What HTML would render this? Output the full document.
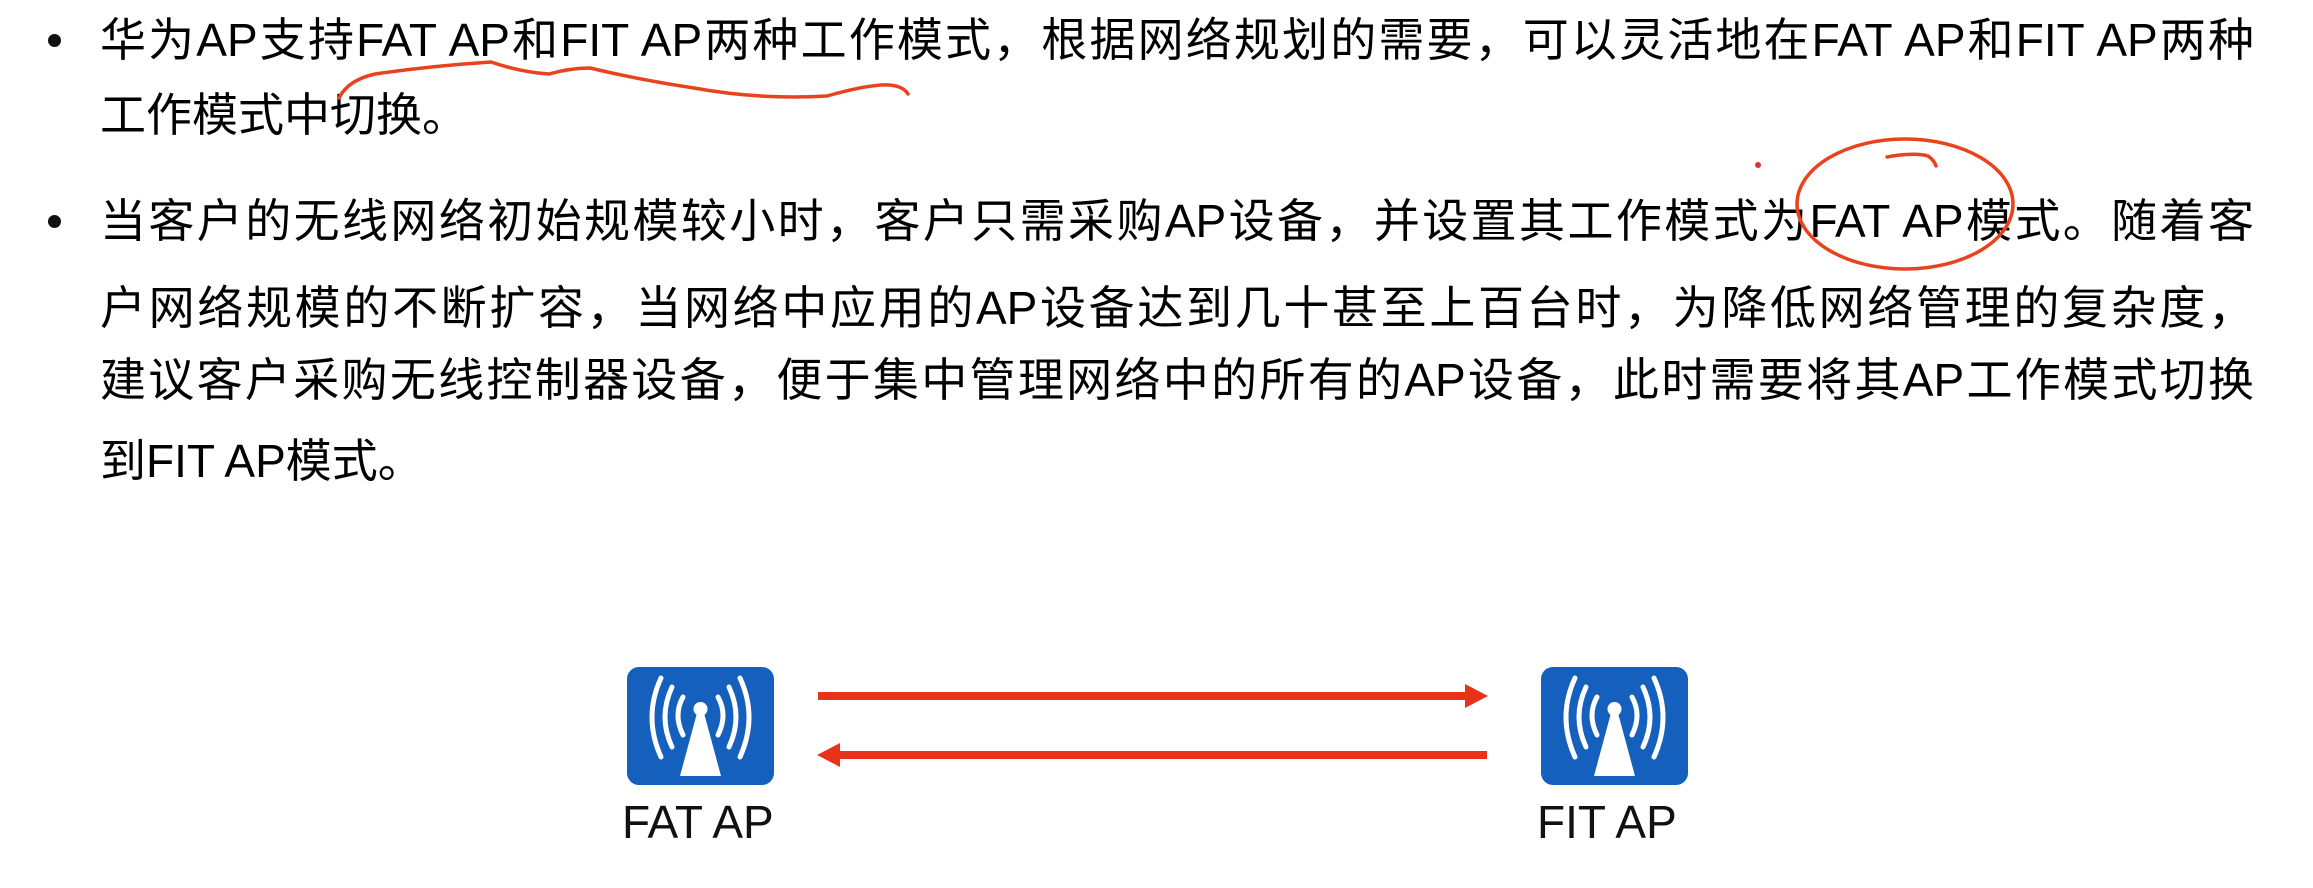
<!DOCTYPE html>
<html><head><meta charset="utf-8"><style>
html,body{margin:0;padding:0;background:#fff;width:2313px;height:888px;overflow:hidden;position:relative}
.t{position:absolute;left:100px;width:2154px;font-family:"Liberation Sans","Noto Sans CJK SC",sans-serif;font-size:46px;color:#000;white-space:nowrap;line-height:60px}
.j{text-align:justify;text-align-last:justify;white-space:normal}
.b{position:absolute;left:48px;width:13px;height:13px;border-radius:50%;background:#111}
.lab{position:absolute;font-family:"Liberation Sans",sans-serif;font-size:46px;color:#111;line-height:50px}
</style></head><body>
<div class="b" style="top:34px"></div>
<div class="t j" style="top:10px">华为AP支持FAT AP和FIT AP两种工作模式，根据网络规划的需要，可以灵活地在FAT AP和FIT AP两种</div>
<div class="t" style="top:85px">工作模式中切换。</div>
<div class="b" style="top:215px"></div>
<div class="t j" style="top:191px">当客户的无线网络初始规模较小时，客户只需采购AP设备，并设置其工作模式为FAT AP模式。随着客</div>
<div class="t j" style="top:278px">户网络规模的不断扩容，当网络中应用的AP设备达到几十甚至上百台时，为降低网络管理的复杂度，</div>
<div class="t j" style="top:350px">建议客户采购无线控制器设备，便于集中管理网络中的所有的AP设备，此时需要将其AP工作模式切换</div>
<div class="t" style="top:431px">到FIT AP模式。</div>

<svg width="2313" height="888" style="position:absolute;left:0;top:0" xmlns="http://www.w3.org/2000/svg">
<g fill="none" stroke="#e8431c" stroke-width="3.5" stroke-linecap="round">
<path d="M339 98 Q348 80 375 74 Q430 66 491 62 Q520 72 549 74 Q570 68 590 68 Q640 80 694 88 Q760 100 827 96 Q870 84 889 85 Q903 86 908 94"/>
<ellipse cx="1905" cy="204" rx="108" ry="65"/>
<path d="M1887 157 Q1915 152 1928 156 Q1934 160 1936 166"/>
</g>
<circle cx="1758" cy="165" r="3" fill="#d33"/>
<defs>
<g id="ap">
<rect x="0" y="0" width="147" height="118" rx="12" fill="#1560bd"/>
<g fill="none" stroke="#fff" stroke-width="5" stroke-linecap="round">
<path d="M56 30 Q46 48 56 68"/><path d="M91 30 Q101 48 91 68"/>
<path d="M45 20 Q31 50 45 80"/><path d="M102 20 Q116 50 102 80"/>
<path d="M34 11 Q16 50 34 90"/><path d="M113 11 Q131 50 113 90"/>
</g>
<circle cx="73.5" cy="42" r="7" fill="#fff"/>
<path d="M70 46 L77 46 L94 109 L53 109 Z" fill="#fff"/>
</g>
</defs>
<use href="#ap" x="627" y="667"/>
<use href="#ap" x="1541" y="667"/>
<g fill="#e8331a">
<rect x="818" y="692" width="652" height="8"/>
<path d="M1465 684 L1488 696 L1465 708 Z"/>
<rect x="835" y="751" width="652" height="8"/>
<path d="M840 743 L817 755 L840 767 Z"/>
</g>
</svg>
<div class="lab" style="left:622px;top:797px">FAT AP</div>
<div class="lab" style="left:1537px;top:797px">FIT AP</div>
</body></html>
